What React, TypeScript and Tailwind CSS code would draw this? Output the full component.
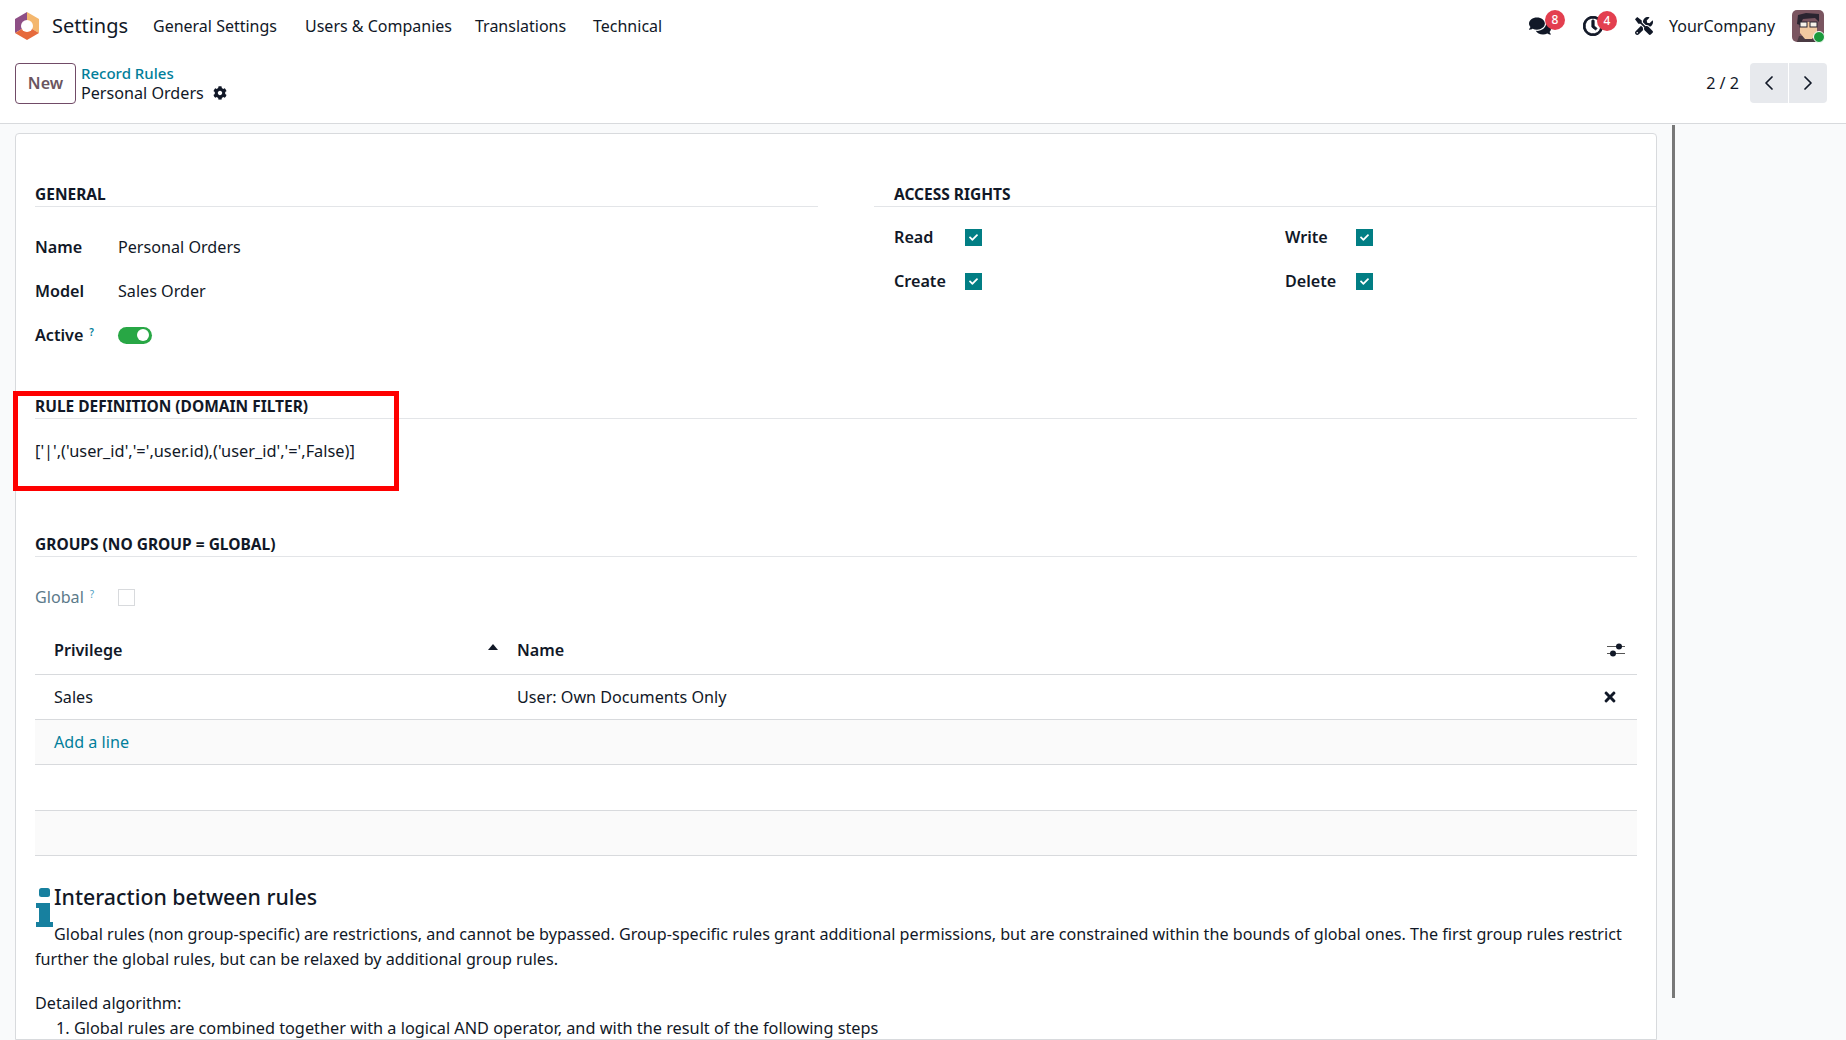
import { ChevronLeft, ChevronRight } from "lucide-react";
import { FaCheck, FaCog, FaComments, FaRegClock, FaTimes, FaTools } from "react-icons/fa";

const navItems = [
  { label: "General Settings", cls: "w-[152px]" },
  { label: "Users & Companies", cls: "w-[170px]" },
  { label: "Translations", cls: "w-[118px]" },
  { label: "Technical", cls: "" },
];

function Logo() {
  return (
    <svg viewBox="0 0 24 28" className="w-[24px] h-[28px]">
      <path d="M12 0 L0 7 L0 21 L12 14 Z" fill="#8e4f86" />
      <path d="M12 0 L24 7 L24 21 L12 14 Z" fill="#f4b76e" />
      <path d="M0 21 L12 28 L24 21 L12 14 Z" fill="#e66a3c" />
      <circle cx="12" cy="14" r="6" fill="#fff" />
    </svg>
  );
}

function Avatar() {
  return (
    <div className="relative w-[32px] h-[32px]">
      <svg viewBox="0 0 32 32" className="w-[32px] h-[32px] rounded-[5px]">
        <rect width="32" height="32" fill="#7a5560" />
        <path d="M5 32 L7 26 L26 26 L28 32 Z" fill="#4a3a42" />
        <path d="M8 12 L25 12 L25 23 L20 29 L13 29 L8 23 Z" fill="#f2c9a0" />
        <path d="M5 14 L6 5 L14 3 L27 4 L27 12 L23 8 L11 9 L8 15 Z" fill="#2a2430" />
        <rect x="8" y="12" width="7" height="5" fill="#f7f2ea" stroke="#2a2430" strokeWidth="1" />
        <rect x="18" y="12" width="7" height="5" fill="#f7f2ea" stroke="#2a2430" strokeWidth="1" />
      </svg>
      <span className="absolute right-[-1px] bottom-[-1px] w-[12px] h-[12px] rounded-full bg-[#1b9a3c] border border-white" />
    </div>
  );
}

function Badge({ n }: { n: number }) {
  return (
    <span className="absolute top-[-5px] right-[-14px] w-[20px] h-[20px] rounded-full bg-[#e33f4f] text-white text-[12px] font-medium flex items-center justify-center">
      {n}
    </span>
  );
}

function Check() {
  return (
    <span className="w-[17px] h-[17px] bg-[#017e84] flex items-center justify-center">
      <FaCheck className="w-[9px] h-[9px] text-white" />
    </span>
  );
}

function SectionTitle({ text, cls }: { text: string; cls: string }) {
  return (
    <div className={`h-[24px] border-b border-[#e3e5e8] text-[15.5px] font-bold uppercase leading-[22px] ${cls}`}>{text}</div>
  );
}

function Help({ muted }: { muted?: boolean }) {
  return <sup className={`ml-[6px] text-[10px] ${muted ? "text-[#4f9fc2]" : "text-[#017e9a]"}`}>?</sup>;
}

export default function App() {
  return (
    <div
      className="w-[1846px] h-[1040px] overflow-hidden bg-[#f9fafb] text-[#111827] text-[16.15px] flex flex-col"
      style={{ fontFamily: '"Noto Sans", sans-serif' }}
    >
      {/* Navbar */}
      <div className="h-[46px] bg-white flex items-center shrink-0 pl-[15px] pr-[22px] pt-[6px] text-[16px]">
        <Logo />
        <span className="ml-[13px] w-[101px] text-[20px]">Settings</span>
        {navItems.map((item) => (
          <span key={item.label} className={item.cls}>
            {item.label}
          </span>
        ))}
        <div className="ml-auto flex items-center">
          <span className="relative mr-[32px]">
            <FaComments className="w-[22px] h-[22px] block" />
            <Badge n={8} />
          </span>
          <span className="relative mr-[32px]">
            <FaRegClock className="w-[20px] h-[20px] block" stroke="currentColor" strokeWidth={25} />
            <Badge n={4} />
          </span>
          <FaTools className="w-[18px] h-[18px] mr-[16px]" />
          <span className="w-[123px]">YourCompany</span>
          <Avatar />
        </div>
      </div>

      {/* Control panel */}
      <div className="h-[78px] bg-white border-b border-[#d8dadd] flex items-center shrink-0 pl-[15px] pr-[19px] pb-[3px]">
        <button className="w-[61px] h-[41px] border border-[#714b67] rounded-[4px] font-semibold text-[#6b5560]">New</button>
        <div className="ml-[5px] pt-[2px]">
          <div className="text-[15px] font-medium text-[#017e9a] leading-[18px]">Record Rules</div>
          <div className="flex items-center leading-[22px]">
            Personal Orders
            <FaCog className="ml-[9px] w-[14px] h-[14px]" />
          </div>
        </div>
        <span className="ml-auto mr-[11px]">2 / 2</span>
        <div className="flex gap-px h-[40px]">
          <span className="w-[38px] bg-[#e7e9ed] rounded-l-[4px] flex items-center justify-center">
            <ChevronLeft className="w-[24px] h-[24px]" strokeWidth={1.75} />
          </span>
          <span className="w-[38px] bg-[#e7e9ed] rounded-r-[4px] flex items-center justify-center">
            <ChevronRight className="w-[24px] h-[24px]" strokeWidth={1.75} />
          </span>
        </div>
      </div>

      {/* Content */}
      <div className="flex flex-1 min-h-0 pl-[15px]">
        <div className="relative w-[1642px] mt-[9px] bg-white border border-[#d8dadd] rounded-t-[4px] px-[19px] pt-[49px]">
          <div className="flex">
            <div className="w-[783px]">
              <SectionTitle text="General" cls="" />
              <div className="mt-[18px] h-[44px] flex items-center">
                <span className="w-[83px] font-semibold">Name</span>
                <span>Personal Orders</span>
              </div>
              <div className="h-[44px] flex items-center">
                <span className="w-[83px] font-semibold">Model</span>
                <span>Sales Order</span>
              </div>
              <div className="h-[44px] flex items-center">
                <span className="w-[83px] font-semibold">
                  Active
                  <Help />
                </span>
                <span className="w-[34px] h-[17px] rounded-full bg-[#28a745] flex items-center justify-end pr-[3px]">
                  <span className="w-[12px] h-[12px] rounded-full bg-white" />
                </span>
              </div>
            </div>
            <div className="ml-[56px] flex-1 -mr-[19px]">
              <SectionTitle text="Access Rights" cls="pl-[20px]" />
              <div className="mt-[8px] pl-[20px] grid grid-cols-[391px_1fr]">
                {[
                  ["Read", "Write"],
                  ["Create", "Delete"],
                ].map((row) =>
                  row.map((label) => (
                    <div key={label} className="h-[44px] flex items-center">
                      <span className="w-[71px] font-semibold">{label}</span>
                      <Check />
                    </div>
                  )),
                )}
              </div>
            </div>
          </div>

          <SectionTitle text="Rule Definition (Domain Filter)" cls="mt-[38px]" />
          <div className="mt-[20px] h-[25px] leading-[25px] text-[16.35px]">{"['|',('user_id','=',user.id),('user_id','=',False)]"}</div>

          <SectionTitle text="Groups (no group = global)" cls="mt-[69px]" />
          <div className="mt-[27px] h-[26px] flex items-center text-[#5c7a8a]">
            <span className="w-[83px]">
              Global
              <Help muted />
            </span>
            <span className="w-[17px] h-[17px] border border-[#d8dadd]" />
          </div>

          {/* Privileges table */}
          <div className="mt-[19px]">
            <div className="h-[46px] border-b border-[#d8dadd] flex items-center font-semibold pb-[3px]">
              <span className="w-[482px] pl-[19px] flex items-center justify-between pr-[19px]">
                Privilege
                <svg viewBox="0 0 10 6" className="w-[10px] h-[6px] mb-[6px]">
                  <path d="M5 0 L10 6 L0 6 Z" fill="#111827" />
                </svg>
              </span>
              <span className="flex-1">Name</span>
              <svg viewBox="0 0 18 14" className="w-[18px] h-[14px] mr-[12px]">
                <path d="M0 3.5 H18 M0 10.5 H18" stroke="#555" strokeWidth="1.2" />
                <circle cx="12" cy="3.5" r="3" fill="#111827" />
                <circle cx="6" cy="10.5" r="3" fill="#111827" />
              </svg>
            </div>
            <div className="h-[45px] border-b border-[#d8dadd] flex items-center">
              <span className="w-[482px] pl-[19px]">Sales</span>
              <span className="flex-1">User: Own Documents Only</span>
              <FaTimes className="w-[16px] h-[16px] mr-[19px]" />
            </div>
            <div className="h-[45px] border-b border-[#d8dadd] bg-[#fafafa] flex items-center pl-[19px] text-[#017e9a]">
              Add a line
            </div>
            <div className="h-[46px] border-b border-[#d8dadd]" />
            <div className="h-[45px] border-b border-[#d8dadd] bg-[#fafafa]" />
          </div>

          {/* Help text */}
          <div className="mt-[24px] leading-[25px]">
            <div className="h-[32px] flex items-center text-[21.3px] font-medium relative pl-[19px]">
              <svg viewBox="0 0 17 39" className="absolute left-[1px] top-[8px] w-[17px] h-[39px]">
                <rect x="3" y="0" width="11" height="9" rx="2.5" fill="#17809f" />
                <path d="M0 15 H14 V34 H17 V39 H0 V34 H3 V20 H0 Z" fill="#17809f" />
              </svg>
              Interaction between rules
            </div>
            <p className="mt-[10px] indent-[19px] whitespace-nowrap">
              Global rules (non group-specific) are restrictions, and cannot be bypassed. Group-specific rules grant additional permissions, but are constrained within the bounds of global ones. The first group rules restrict
              <br />
              further the global rules, but can be relaxed by additional group rules.
            </p>
            <p className="mt-[19px]">Detailed algorithm:</p>
            <p className="pl-[21px] text-[16.3px]">1. Global rules are combined together with a logical AND operator, and with the result of the following steps</p>
          </div>

          {/* highlight drawn on the screenshot */}
          <div className="absolute left-[-3px] top-[257px] w-[386px] h-[100px] border-[5px] border-[#fe0000]" />
        </div>
        <div className="ml-[15px] w-[3px] h-[873px] mt-[1px] bg-[#787878]" />
      </div>
    </div>
  );
}
